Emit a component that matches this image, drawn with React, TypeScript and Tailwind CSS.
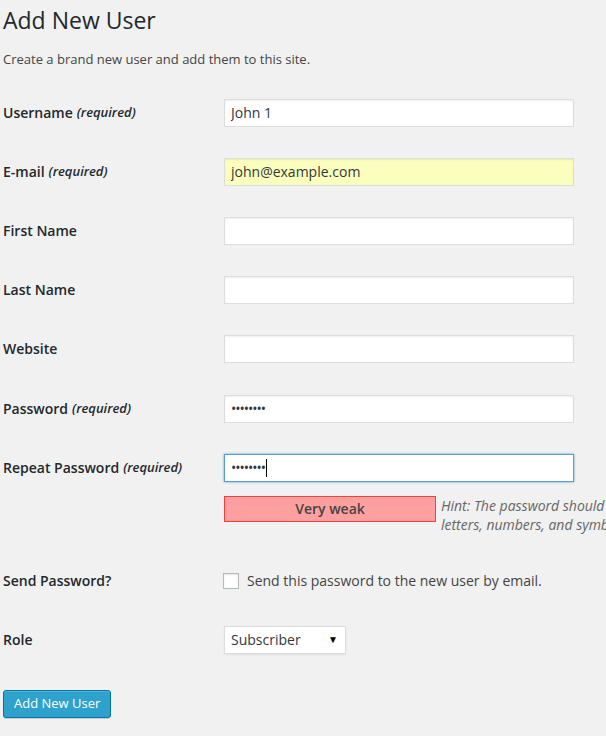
import type { ReactNode } from 'react';

/** One row of the form table: label column on the left, field on the right */
function FormRow({
  label,
  required,
  pad = 'pt-[15px] pb-[16px]',
  children,
}: {
  label: string;
  required?: boolean;
  pad?: string;
  children: ReactNode;
}) {
  return (
    <div className={`flex items-start ${pad}`}>
      <div className="w-[221px] shrink-0 h-[28px] flex items-center text-[14px] font-semibold text-[#23282d]">
        {label}
        {required && <span className="ml-[4px] text-[13px] italic">(required)</span>}
      </div>
      <div className="flex-1">{children}</div>
    </div>
  );
}

function TextField({ value = '', autofill }: { value?: string; autofill?: boolean }) {
  return (
    <input
      readOnly
      defaultValue={value}
      className={`block w-[350px] h-[28px] px-[6px] border border-[#ddd] shadow-[inset_0_1px_2px_rgba(0,0,0,0.07)] text-[14px] text-[#32373c] outline-none ${
        autofill ? 'bg-[#faffbd]' : 'bg-white'
      }`}
    />
  );
}

function PasswordField({ focused }: { focused?: boolean }) {
  return (
    <div
      className={`w-[350px] h-[28px] px-[6px] flex items-center bg-white border text-[14px] text-[#32373c] ${
        focused
          ? 'border-[#5b9dd9] shadow-[0_0_2px_rgba(30,140,190,0.8)]'
          : 'border-[#ddd] shadow-[inset_0_1px_2px_rgba(0,0,0,0.07)]'
      }`}
    >
      <span className="tracking-[-1px]">••••••••</span>
      {focused && <span className="ml-[1px] w-px h-[18px] bg-black" />}
    </div>
  );
}

export default function App() {
  return (
    <div className="min-h-screen w-full overflow-hidden bg-[#f1f1f1] font-['Open_Sans',sans-serif] text-[#444]">
      <div className="pl-[3px] pb-[18px]">
        <h1 className="mt-[6px] text-[23px] leading-[29px] font-normal text-[#23282d]">Add New User</h1>
        <p className="mt-[15px] text-[13px] leading-[19.5px] text-[#444]">
          Create a brand new user and add them to this site.
        </p>

        <div className="mt-[14px]">
          <FormRow label="Username" required>
            <TextField value="John 1" />
          </FormRow>
          <FormRow label="E-mail" required>
            <TextField value="john@example.com" autofill />
          </FormRow>
          <FormRow label="First Name">
            <TextField />
          </FormRow>
          <FormRow label="Last Name">
            <TextField />
          </FormRow>
          <FormRow label="Website">
            <TextField />
          </FormRow>
          <FormRow label="Password" required pad="pt-[16px] pb-[15px]">
            <PasswordField />
          </FormRow>

          {/* Repeat password + strength meter and hint */}
          <div className="flex items-start pt-[16px] pb-[16px]">
            <div className="w-[221px] shrink-0 h-[28px] flex items-center text-[14px] font-semibold text-[#23282d]">
              Repeat Password
              <span className="ml-[4px] text-[13px] italic">(required)</span>
            </div>
            <div className="flex-1">
              <PasswordField focused />
              <div className="mt-[14px] flex items-start">
                <div className="w-[212px] h-[26px] shrink-0 flex items-center justify-center bg-[#ffa0a0] border border-[#f04040] text-[14px] font-semibold text-[#444]">
                  Very weak
                </div>
                <p className="ml-[5px] w-[690px] shrink-0 text-[14px] leading-[19.5px] italic text-[#666]">
                  Hint: The password should be at least seven characters long. To make it stronger, use upper and lower case
                  letters, numbers, and symbols like ! " ? $ % ^ &amp; ).
                </p>
              </div>
            </div>
          </div>

          <div className="flex items-center h-[60px]">
            <div className="w-[220px] shrink-0 text-[14px] font-semibold text-[#23282d]">Send Password?</div>
            <label className="flex items-center text-[14px] text-[#444]">
              <span className="w-[16px] h-[16px] bg-white border border-[#b4b9be] shadow-[inset_0_1px_2px_rgba(0,0,0,0.1)]" />
              <span className="ml-[8px]">Send this password to the new user by email.</span>
            </label>
          </div>

          <FormRow label="Role">
            <div className="w-[122px] h-[28px] pl-[6px] pr-[7px] flex items-center justify-between bg-white border border-[#ddd] shadow-[0_1px_2px_rgba(0,0,0,0.07)] text-[14px] text-[#32373c]">
              <span>Subscriber</span>
              <span className="text-[10px] text-black">▼</span>
            </div>
          </FormRow>
        </div>

        <button className="mt-[20px] h-[28px] px-[10px] rounded-[3px] bg-[#2ea2cc] border border-[#0074a2] shadow-[inset_0_1px_0_rgba(120,200,230,0.5),0_1px_0_rgba(0,0,0,0.15)] text-[13px] text-white">
          Add New User
        </button>
      </div>
    </div>
  );
}
